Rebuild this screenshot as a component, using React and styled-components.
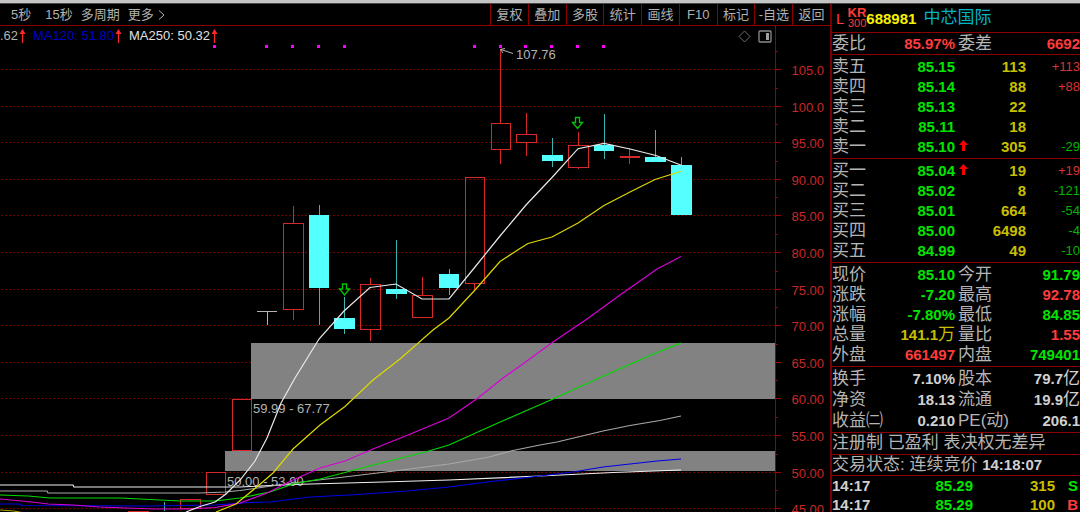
import styled, { createGlobalStyle } from "styled-components";

const GlobalStyle = createGlobalStyle`
  * {
    box-sizing: border-box;
  }

  body {
    margin: 0;
    background-color: #000;
    color: #b4b4b4;
    font-family: "Liberation Sans", "Noto Sans CJK SC", sans-serif;
    font-size: 13px;
  }
`;

const colors = {
  red: "#ff3c3c",
  green: "#00e400",
  yellow: "#c8be00",
  white: "#d0d0d0",
  line: "#8c0000",
};

const Page = styled.div`
  height: 100vh;
  overflow: hidden;
  border-top: 3px solid #c4c4c4;
`;

const Layout = styled.div`
  display: flex;
  align-items: stretch;
  min-height: 100%;
  border-top: 1px solid #4a4a4a;
`;

const Main = styled.main`
  flex: 1;
  min-width: 0;
`;

const Toolbar = styled.nav`
  display: flex;
  justify-content: space-between;
  height: 22px;
  border-bottom: 1px solid ${colors.line};
`;

const PeriodGroup = styled.div`
  display: flex;
  align-items: center;
  gap: 8px;
  padding-left: 11px;
`;

const PlainButton = styled.button`
  display: flex;
  align-items: center;
  justify-content: center;
  gap: 4px;
  padding: 0;
  border: none;
  background: none;
  color: #b0b0b0;
  font: inherit;
  line-height: 20px;
  white-space: nowrap;
  cursor: pointer;

  &:hover {
    color: #fff;
  }
`;

const PeriodButton = styled(PlainButton)`
  margin-right: ${(props) => (props.$wide ? "6px" : "0")};
`;

const ToolGroup = styled.div`
  display: grid;
  grid-template-columns: repeat(9, 1fr);
  width: 340px;
`;

const ToolButton = styled(PlainButton)`
  border-left: 1px solid ${colors.line};
`;

const Chart = styled.section`
  position: relative;
`;

const ChartSvg = styled.svg`
  display: block;
  width: 100%;
  height: auto;
  font-size: 13px;
`;

const Legend = styled.div`
  position: absolute;
  top: 2px;
  left: 0;
  display: flex;
  gap: 7px;
  line-height: 16px;
`;

const LegendItem = styled.span`
  display: flex;
  align-items: center;
  gap: 1px;
  color: ${(props) => props.$color};
`;

const ChartTools = styled.div`
  position: absolute;
  top: 4px;
  right: 58px;
  display: flex;
  gap: 7px;

  button {
    line-height: 0;
  }
`;

const Sidebar = styled.aside`
  width: 250px;
  flex-shrink: 0;
  border-left: 2px solid #780000;
`;

const StockHeader = styled.header`
  display: flex;
  align-items: center;
  height: 29px;
  padding-left: 4px;
  border-bottom: 1px solid ${colors.line};
  color: ${colors.red};
  font-size: 15px;
`;

const Badge = styled.span`
  display: flex;
  flex-direction: column;
  align-items: flex-end;
  width: 22px;
  font-size: 11px;
  line-height: 11px;
`;

const BadgeTop = styled.strong`
  font-size: 13px;
`;

const StockCode = styled.span`
  color: #f4f000;
  font-weight: bold;
`;

const StockName = styled.h1`
  margin: 0 0 0 7px;
  color: #00b4c8;
  font-size: 17px;
  font-weight: normal;
  line-height: 20px;
`;

const Panel = styled.section`
  padding: ${(props) => props.$padding || "0"};
  border-bottom: 1px solid ${colors.line};
`;

const Note = styled.p`
  height: ${(props) => props.$height};
  margin: 0;
  border-bottom: 1px solid ${colors.line};
  font-size: 17px;
  line-height: 20px;
  white-space: nowrap;
`;

const Clock = styled.strong`
  color: ${colors.white};
  font-size: 15px;
`;

const Table = styled.table`
  width: 100%;
  table-layout: fixed;
  border-collapse: collapse;
  line-height: ${(props) => props.$row}px;

  th,
  td {
    height: ${(props) => props.$row}px;
    padding: 0;
    white-space: nowrap;
    vertical-align: top;
  }
`;

const Label = styled.th`
  font-size: 17px;
  font-weight: normal;
  text-align: left;
`;

const Value = styled.td`
  color: ${(props) => colors[props.$tone]};
  font-size: 15px;
  font-weight: bold;
  text-align: ${(props) => props.$align || "right"};
`;

const Unit = styled.span`
  font-size: 17px;
  font-weight: normal;
`;

const Change = styled.td`
  color: ${(props) => (props.$up ? "#d83232" : "#00b400")};
  font-size: 13px;
  text-align: right;
`;

const ArrowCell = styled.td`
  text-align: center;
`;

const periods = [
  { label: "5秒", wide: true },
  { label: "15秒" },
  { label: "多周期" },
];

const tools = ["复权", "叠加", "多股", "统计", "画线", "F10", "标记", "-自选", "返回"];

const asks = [
  ["卖五", "85.15", "113", "+113"],
  ["卖四", "85.14", "88", "+88"],
  ["卖三", "85.13", "22", ""],
  ["卖二", "85.11", "18", ""],
  ["卖一", "85.10", "305", "-29", true],
];

const bids = [
  ["买一", "85.04", "19", "+19", true],
  ["买二", "85.02", "8", "-121"],
  ["买三", "85.01", "664", "-54"],
  ["买四", "85.00", "6498", "-4"],
  ["买五", "84.99", "49", "-10"],
];

// label, value, tone, unit for the left and the right half of each row
const ratio = [[["委比", "85.97%", "red"], ["委差", "6692", "red"]]];

const quotes = [
  [["现价", "85.10", "green"], ["今开", "91.79", "green"]],
  [["涨跌", "-7.20", "green"], ["最高", "92.78", "red"]],
  [["涨幅", "-7.80%", "green"], ["最低", "84.85", "green"]],
  [["总量", "141.1", "yellow", "万"], ["量比", "1.55", "red"]],
  [["外盘", "661497", "red"], ["内盘", "749401", "green"]],
];

const basics = [
  [["换手", "7.10%", "white"], ["股本", "79.7", "white", "亿"]],
  [["净资", "18.13", "white"], ["流通", "19.9", "white", "亿"]],
  [["收益㈡", "0.210", "white"], ["PE(动)", "206.1", "white"]],
];

const ticks = [
  ["14:17", "85.29", "315", "S"],
  ["14:17", "85.29", "100", "B"],
];

// kind, left, right, body top, body bottom, wick top, wick bottom
const candles = [
  ["up", 128, 148, 511, 520, 511, 520],
  ["up", 180, 200, 499, 508, 499, 508],
  ["up", 206, 225, 472, 494, 472, 494],
  ["up", 232, 251, 399, 450, 399, 450],
  ["up", 283, 303, 223, 309, 206, 320],
  ["down", 309, 329, 215, 288, 205, 325],
  ["down", 334, 355, 318, 329, 297, 334],
  ["up", 360, 380, 284, 329, 278, 341],
  ["down", 386, 407, 289, 294, 240, 299],
  ["up", 412, 432, 295, 317, 277, 318],
  ["down", 439, 459, 274, 288, 269, 295],
  ["up", 465, 484, 177, 283, 177, 291],
  ["up", 491, 510, 123, 149, 49, 164],
  ["up", 516, 536, 134, 142, 113, 156],
  ["down", 542, 563, 155, 161, 138, 167],
  ["up", 568, 588, 145, 167, 132, 169],
  ["down", 594, 614, 145, 151, 114, 159],
  ["up", 620, 639, 156, 157, 148, 164],
  ["down", 645, 666, 157, 162, 130, 162],
  ["down", 671, 692, 165, 215, 157, 215],
];

const averages = [
  {
    color: "#f0f0f0",
    points:
      "0,485 73,485 74,487 240,487 293,484.5 383,482 449,480 540,476 613,472.5 681,470",
  },
  {
    color: "#a8a8a8",
    points:
      "0,491 47,491 48,493 200,493 225,492 240,490.5 293,483 340,477.5 390,471.5 449,464 487,457.5 513,450.5 540,445 557,442 603,431 630,425.5 660,420.5 681,416",
  },
  {
    color: "#0000e6",
    points:
      "0,504 20,504 21,505.5 150,506 215,505 250,502.5 270,502 310,497 350,495 407,491 449,487 487,482 540,476 573,472 603,467 657,461 681,459",
  },
  {
    color: "#00d800",
    points:
      "0,495 28,496 50,498 120,498 150,499.5 180,501 215,501 240,498 270,492 293,484 320,479 345,472.5 373,465 427,451.5 449,445 480,431 507,419 553,399 600,377.5 657,352.5 681,343",
  },
  {
    color: "#d800d8",
    points:
      "0,499 32,502 48,504 73,505 99,507 125,508 155,509 190,509 215,507.5 240,503 267,493 293,480 320,468 345,461 373,449 403,437 449,418 478,398 503,378 520,366 553,342 587,319 620,295 657,269 681,256.5",
  },
  {
    color: "#dcd800",
    points:
      "216,512 236,504 258,486 273,473 293,449 320,425 345,406.5 373,380 400,359 433,330 449,318 475,290 500,261.5 520,248.5 528,243.5 552,237 578,223 604,205.5 630,192 655,179.5 682,171",
  },
  { color: "#a8a000", points: "0,510 14,511 24,513" },
  {
    color: "#e8e8e8",
    points:
      "186,512 200,506.5 215,502 226,494 240,480 255,461 267,438 281,403 295,378 319,339 344,311 370,287.5 396,284 422,299 449,299 475,267 500,236 526,205 552,177.5 578,148.7 604,143.3 630,149 656,155.5 682,165.5",
  },
];

const axisLabels = [
  "105.0", "100.0", "95.00", "90.00", "85.00", "80.00", "75.00",
  "70.00", "65.00", "60.00", "55.00", "50.00", "45.00",
];

const signalDots = [214, 266, 292, 318, 344, 474, 500, 525, 551, 577, 603];

const gridY = (index) => Math.round(69 + index * 36.6) + 0.5;

function RiseArrow() {
  return (
    <svg width="7" height="14" viewBox="0 0 7 14" aria-hidden="true">
      <path d="M3.5 1V14" stroke="#ff2828" strokeWidth="1.3" />
      <path d="M3.5 0L6.5 5H0.5Z" fill="#ff2828" />
    </svg>
  );
}

function BoldArrow() {
  return (
    <svg width="9" height="11" viewBox="0 0 9 11" aria-hidden="true">
      <path d="M4.5 0L9 5H6V11H3V5H0Z" fill="#ff0000" />
    </svg>
  );
}

function Candle({ candle }) {
  const [kind, left, right, top, bottom, high, low] = candle;
  const x = Math.floor((left + right) / 2) + 0.5;
  const width = right - left;
  if (kind === "down") {
    return (
      <g>
        <path d={`M${x} ${high}V${low}`} stroke="#3cb4b4" />
        <rect x={left} y={top} width={width} height={bottom - top} fill="#54ffff" />
      </g>
    );
  }
  return (
    <g stroke="#d62828" fill="none">
      <path d={`M${x} ${high}V${top}M${x} ${bottom}V${low}`} />
      <rect x={left + 0.5} y={top + 0.5} width={width} height={bottom - top} />
    </g>
  );
}

function SellMark({ x, y }) {
  return (
    <path
      d={`M${x - 2} ${y}H${x + 2}V${y + 5}H${x + 5}L${x} ${y + 11}L${x - 5} ${y + 5}H${x - 2}Z`}
      fill="none"
      stroke="#00c800"
      strokeWidth="1.3"
    />
  );
}

function PriceChart() {
  return (
    <ChartSvg viewBox="0 26 830 486" role="img" aria-label="K线图">
      {axisLabels.map((label, index) => (
        <g key={label}>
          <path
            d={`M1 ${gridY(index)}H775`}
            stroke="#700000"
            strokeDasharray="2 2"
          />
          <path
            d={`M775 ${gridY(index)}H781M775 ${gridY(index) - 18}H778`}
            stroke="#a00000"
          />
          <text x="824" y={gridY(index) + 5} textAnchor="end" fill="#c82828">
            {label}
          </text>
        </g>
      ))}
      <rect x="251" y="343" width="524" height="56" fill="#828282" />
      <rect x="225" y="451" width="550" height="20" fill="#828282" />
      <path d="M775.5 26V512" stroke="#960000" />

      <path d="M164.5 502V511" stroke="#3cb4b4" />
      <path d="M257 311.5H277M267.5 311V325" stroke="#b4b4b4" />
      {candles.map((candle) => (
        <Candle key={candle[1]} candle={candle} />
      ))}

      <g fill="#b4b4b4">
        <text x="516" y="59">107.76</text>
        <text x="253" y="413">59.99 - 67.77</text>
        <text x="227" y="486">50.00 - 53.90</text>
      </g>
      {averages.map((line) => (
        <polyline
          key={line.color}
          points={line.points}
          fill="none"
          stroke={line.color}
          strokeWidth="1.2"
        />
      ))}

      {signalDots.map((x) => (
        <rect key={x} x={x - 1} y="45" width="3" height="3" fill="#ff00ff" />
      ))}
      <path
        d="M513 53.5L501 49.5M505 48.5L500.5 49.5L503 53"
        fill="none"
        stroke="#b4b4b4"
      />
      <SellMark x={344.5} y={284} />
      <SellMark x={577.5} y={117.5} />
    </ChartSvg>
  );
}

function DepthTable({ rows }) {
  return (
    <Table $row={20}>
      <colgroup>
        <col width="40" />
        <col width="83" />
        <col width="16" />
        <col width="55" />
        <col />
      </colgroup>
      <tbody>
        {rows.map(([label, price, volume, change, marked]) => (
          <tr key={label}>
            <Label scope="row">{label}</Label>
            <Value $tone="green">{price}</Value>
            <ArrowCell>{marked && <BoldArrow />}</ArrowCell>
            <Value $tone="yellow">{volume}</Value>
            <Change $up={change.startsWith("+")}>{change}</Change>
          </tr>
        ))}
      </tbody>
    </Table>
  );
}

function StatCells({ stat }) {
  const [label, value, tone, unit] = stat;
  return (
    <>
      <Label scope="row">{label}</Label>
      <Value $tone={tone}>
        {value}
        {unit && <Unit>{unit}</Unit>}
      </Value>
    </>
  );
}

function StatTable({ rows, rowHeight = 20 }) {
  return (
    <Table $row={rowHeight}>
      <colgroup>
        <col width="52" />
        <col width="71" />
        <col width="3" />
        <col width="50" />
        <col />
      </colgroup>
      <tbody>
        {rows.map(([left, right]) => (
          <tr key={left[0]}>
            <StatCells stat={left} />
            <td />
            <StatCells stat={right} />
          </tr>
        ))}
      </tbody>
    </Table>
  );
}

function TickTable() {
  return (
    <Table $row={19}>
      <colgroup>
        <col width="60" />
        <col width="81" />
        <col width="82" />
        <col width="23" />
        <col />
      </colgroup>
      <tbody>
        {ticks.map(([time, price, volume, side]) => (
          <tr key={volume}>
            <Value $tone="white" $align="left">
              {time}
            </Value>
            <Value $tone="green">{price}</Value>
            <Value $tone="yellow">{volume}</Value>
            <Value $tone={side === "S" ? "green" : "red"}>{side}</Value>
            <td />
          </tr>
        ))}
      </tbody>
    </Table>
  );
}

function App() {
  return (
    <Page>
      <GlobalStyle />
      <Layout>
        <Main>
          <Toolbar>
            <PeriodGroup>
              {periods.map((period) => (
                <PeriodButton key={period.label} $wide={period.wide}>
                  {period.label}
                </PeriodButton>
              ))}
              <PeriodButton>
                更多
                <svg width="7" height="10" viewBox="0 0 7 10" aria-hidden="true">
                  <path d="M1 0.5L6 5L1 9.5" fill="none" stroke="currentColor" />
                </svg>
              </PeriodButton>
            </PeriodGroup>
            <ToolGroup>
              {tools.map((tool) => (
                <ToolButton key={tool}>{tool}</ToolButton>
              ))}
            </ToolGroup>
          </Toolbar>
          <Chart>
            <PriceChart />
            <Legend>
              <LegendItem $color="#b4b4b4">
                .62
                <RiseArrow />
              </LegendItem>
              <LegendItem $color="#0000c8">
                MA120: 51.80
                <RiseArrow />
              </LegendItem>
              <LegendItem $color="#e0e0e0">
                MA250: 50.32
                <RiseArrow />
              </LegendItem>
            </Legend>
            <ChartTools>
              <PlainButton aria-label="标记">
                <svg width="13" height="13" viewBox="0 0 13 13">
                  <path d="M6.5 1L12 6.5L6.5 12L1 6.5Z" fill="none" stroke="#6e6e6e" />
                </svg>
              </PlainButton>
              <PlainButton aria-label="侧栏">
                <svg width="14" height="13" viewBox="0 0 14 13">
                  <rect x="1" y="1" width="12" height="11" rx="1" fill="none" stroke="#8c8c8c" strokeWidth="1.3" />
                  <rect x="8" y="3" width="3" height="7" fill="#a0a0a0" />
                </svg>
              </PlainButton>
            </ChartTools>
          </Chart>
        </Main>

        <Sidebar>
          <StockHeader>
            L
            <Badge>
              <BadgeTop>KR</BadgeTop>
              <span>300</span>
            </Badge>
            <StockCode>688981</StockCode>
            <StockName>中芯国际</StockName>
          </StockHeader>
          <Panel>
            <StatTable rows={ratio} rowHeight={21} />
          </Panel>
          <Panel $padding="2px 0 1px">
            <DepthTable rows={asks} />
          </Panel>
          <Panel $padding="2px 0 1px">
            <DepthTable rows={bids} />
          </Panel>
          <Panel $padding="2px 0 1px">
            <StatTable rows={quotes} />
          </Panel>
          <Panel $padding="1px 0">
            <StatTable rows={basics} rowHeight={21} />
          </Panel>
          <Note $height="22px">注册制 已盈利 表决权无差异</Note>
          <Note $height="21px">
            交易状态: 连续竞价 <Clock>14:18:07</Clock>
          </Note>
          <TickTable />
        </Sidebar>
      </Layout>
    </Page>
  );
}

export default App;
